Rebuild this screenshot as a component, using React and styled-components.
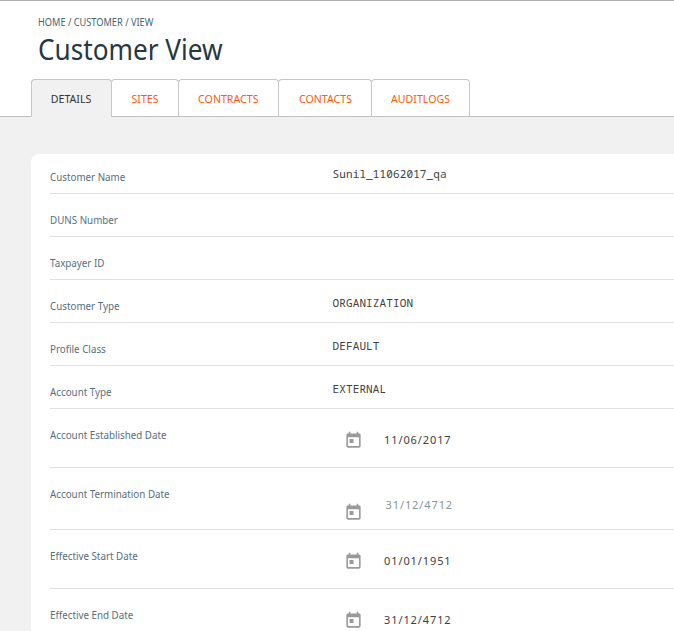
import React from "react";
import styled, { createGlobalStyle } from "styled-components";

const GlobalStyle = createGlobalStyle`
  * { box-sizing: border-box; }
  html, body { margin: 0; height: 100%; overflow: hidden; }
  body {
    background: #f1f1f1;
    font-family: "Noto Sans", "Open Sans", sans-serif;
  }
`;

const Condensed = styled.span`
  display: inline-block;
  white-space: pre;
  transform: scaleX(${(p) => p.$scale});
  transform-origin: ${(p) => p.$origin || "left"} center;
`;

const Header = styled.header`
  height: 117px;
  padding: 14px 0 0 31px;
  background: #fff;
  border-top: 1px solid #b0b0b0;
  box-shadow: inset 0 -1px #c0c2c2;
  display: flex;
  flex-direction: column;
`;

const Breadcrumb = styled.nav`
  padding-left: 7px;
  height: 14px;
  font-size: 10.5px;
  line-height: 14px;
  color: #4a6570;
`;

const Title = styled.h1`
  margin: 0;
  padding-left: 7px;
  height: 50px;
  font-size: 29px;
  font-weight: 400;
  line-height: 40px;
  color: #263843;
`;

const Tabs = styled.div`
  display: flex;
  height: 38px;
`;

const Tab = styled.button`
  width: ${(p) => p.$width}px;
  margin: 0 0 0 ${(p) => (p.$first ? 0 : -1)}px;
  padding: 1px 0 0;
  border: 1px solid #c6c6c6;
  border-bottom-color: ${(p) => (p.$active ? "#f1f1f1" : "#c0c2c2")};
  border-radius: 4px 4px 0 0;
  background: ${(p) => (p.$active ? "#f1f1f1" : "#fff")};
  color: ${(p) => (p.$active ? "#333" : "#ff5a0a")};
  font: inherit;
  font-size: 11px;
`;

const Card = styled.main`
  margin: 37px 0 0 31px;
  padding-left: 19px;
  height: 477px;
  overflow: hidden;
  background: #fff;
  border-radius: 8px 0 0 0;
`;

const Row = styled.div`
  display: flex;
  height: ${(p) => p.$height}px;
  border-bottom: ${(p) => (p.$last ? "none" : "1px solid #e0e0e0")};
`;

const Label = styled.div`
  width: 282px;
  flex: none;
  padding-top: ${(p) => p.$top}px;
  font-size: 11px;
  line-height: 14px;
  color: #566e7c;
`;

const Value = styled.div`
  padding: ${(p) => p.$top}px 0 0 0.5px;
  font-family: "Noto Sans Mono", "DejaVu Sans Mono", monospace;
  font-size: 11px;
  letter-spacing: 0.12px;
  line-height: 14px;
  color: #404040;
`;

const DateField = styled.div`
  display: flex;
  padding-left: 12px;
`;

const CalendarIcon = styled.svg`
  width: 19px;
  height: 19px;
  margin-top: ${(p) => p.$top}px;
  fill: #999;
`;

const DateText = styled.span`
  margin: ${(p) => p.$top}px 0 0 ${(p) => (p.$muted ? 22.5 : 21)}px;
  height: 14px;
  font-size: 11px;
  line-height: 14px;
  letter-spacing: 0.9px;
  color: ${(p) => (p.$muted ? "#82969f" : "#404040")};
`;

const tabs = [
  { name: "DETAILS", width: 81 },
  { name: "SITES", width: 68 },
  { name: "CONTRACTS", width: 101 },
  { name: "CONTACTS", width: 94 },
  { name: "AUDITLOGS", width: 99 },
];

const rows = [
  { label: "Customer Name", value: "Sunil_11062017_qa", height: 40, top: 16 },
  { label: "DUNS Number", height: 43 },
  { label: "Taxpayer ID", height: 43 },
  { label: "Customer Type", value: "ORGANIZATION", height: 43 },
  { label: "Profile Class", value: "DEFAULT", height: 43 },
  { label: "Account Type", value: "EXTERNAL", height: 43 },
  { label: "Account Established Date", date: "11/06/2017", height: 59, iconTop: 22, dateTop: 24 },
  { label: "Account Termination Date", date: "31/12/4712", height: 62, iconTop: 35, dateTop: 30, muted: true },
  { label: "Effective Start Date", date: "01/01/1951", height: 59, iconTop: 22, dateTop: 24 },
  { label: "Effective End Date", date: "31/12/4712", height: 42, iconTop: 22, dateTop: 24 },
];

export default function App() {
  return (
    <>
      <GlobalStyle />
      <Header>
        <Breadcrumb>
          <Condensed $scale={0.878}>HOME / CUSTOMER / VIEW</Condensed>
        </Breadcrumb>
        <Title>
          <Condensed $scale={0.902}>Customer View</Condensed>
        </Title>
        <Tabs>
          {tabs.map((t, i) => (
            <Tab key={t.name} $width={t.width} $first={i === 0} $active={i === 0}>
              <Condensed $scale={0.965} $origin="center">{t.name}</Condensed>
            </Tab>
          ))}
        </Tabs>
      </Header>
      <Card>
        {rows.map((r, i) => (
          <Row key={r.label} $height={r.height} $last={i === rows.length - 1}>
            <Label $top={r.top || 19}>
              <Condensed $scale={0.89}>{r.label}</Condensed>
            </Label>
            {r.value && <Value $top={(r.top || 19) - 3}>{r.value}</Value>}
            {r.date && (
              <DateField>
                <CalendarIcon viewBox="0 0 24 24" $top={r.iconTop}>
                  <path d="M19 3h-1V1h-2v2H8V1H6v2H5c-1.11 0-1.99.9-1.99 2L3 19c0 1.1.89 2 2 2h14c1.1 0 2-.9 2-2V5c0-1.1-.9-2-2-2zm0 16H5V8h14v11zM7 10h5v5H7z" />
                </CalendarIcon>
                <DateText $top={r.dateTop} $muted={r.muted}>{r.date}</DateText>
              </DateField>
            )}
          </Row>
        ))}
      </Card>
    </>
  );
}
